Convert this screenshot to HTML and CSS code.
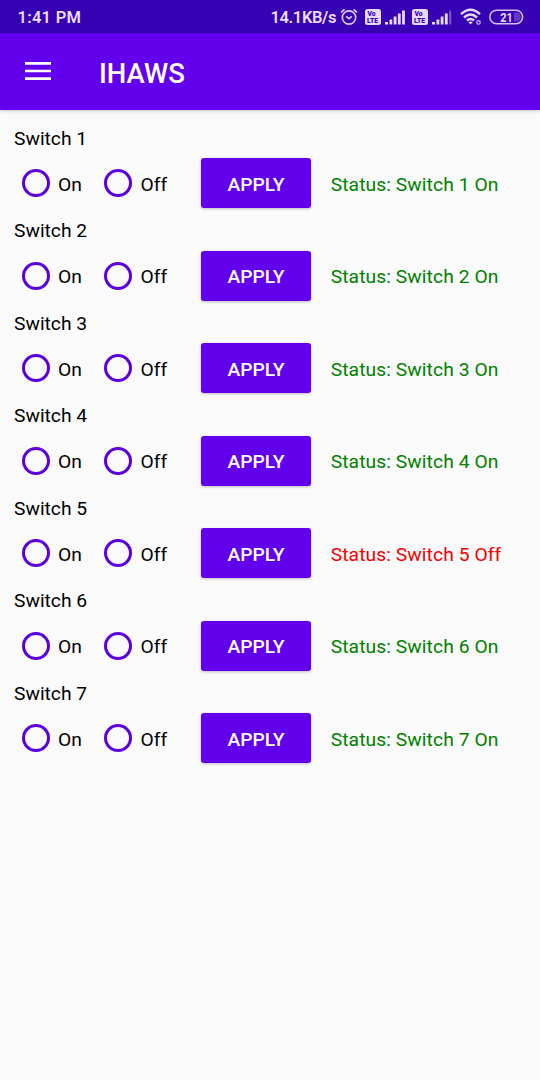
FILE: index.html
```html
<!DOCTYPE html>
<html lang="en">
<head>
<meta charset="utf-8">
<title>IHAWS</title>
<link rel="stylesheet" href="styles.css">
</head>
<body>
<header class="status-bar">
  <span class="clock">1:41 PM</span>
  <span class="speed">14.1KB/s</span>
  <svg class="alarm" width="18" height="18" viewBox="0 0 18 18"><circle cx="9" cy="9.5" r="6.700"/><path d="M1 4.300 4.500 1.300M17 4.300 13.500 1.300M6.200 8.300 9 10.700l2.800-2.400"/></svg>
  <svg class="volte" width="16" height="16" viewBox="0 0 16 16"><rect width="16" height="16" rx="2.5"/><text x="2.500" y="7">Vo</text><text x="2" y="14.300">LTE</text></svg>
  <svg class="signal" width="20" height="16" viewBox="0 0 20 16"><path d="M0 13h3v2.500H0zM4.500 10.500h2.800v5H4.500zM8.700 7.500h2.800v8H8.700zM12.900 4.500h2.800v11h-2.800zM17.100 1.500h2.800v14h-2.800z"/></svg>
  <svg class="volte volte-second" width="16" height="16" viewBox="0 0 16 16"><rect width="16" height="16" rx="2.5"/><text x="2.500" y="7">Vo</text><text x="2" y="14.300">LTE</text></svg>
  <svg class="signal" width="20" height="16" viewBox="0 0 20 16"><path d="M0 13h3v2.500H0zM4.500 10.500h2.800v5H4.500zM8.700 7.500h2.800v8H8.700zM12.900 4.500h2.800v11h-2.800z"/><path class="dim" d="M17.100 1.500h2.200v14h-2.200z"/></svg>
  <svg class="wifi" width="22" height="17" viewBox="0 0 22 17"><path d="M1 6.200Q10.500-2.700 20 6.200M4 9.500q6.500-6 13 0M7 12.500q3.500-3 7 0"/><path class="dot" d="m8.300 14.300 2.200 2.200 2.200-2.200q-2.200-1.700-4.400 0z"/><circle class="badge" cx="18.500" cy="14.500" r="1.700"/></svg>
  <svg class="battery" width="35" height="16" viewBox="0 0 35 16"><path class="rest" d="M25 3.500h2.500a4.500 4.500 0 0 1 0 9H25z"/><rect x=".8" y="1.300" width="32.800" height="13.400" rx="6.700"/><text x="11.300" y="12.600" textLength="12.500" lengthAdjust="spacingAndGlyphs">21</text></svg>
</header>
<nav class="app-bar">
  <svg class="menu" width="26" height="18" viewBox="0 0 26 18"><path d="M0 1.400h26M0 9h26M0 16.600h26"/></svg>
  <h1 class="title">IHAWS</h1>
</nav>
<main class="switches">
  <section class="switch"><div class="label">Switch 1</div><div class="row"><label class="option"><input type="radio" name="s1"><span>On</span></label><label class="option"><input type="radio" name="s1"><span>Off</span></label><button class="apply">APPLY</button><span class="status">Status: Switch 1 On</span></div></section>
  <section class="switch"><div class="label">Switch 2</div><div class="row"><label class="option"><input type="radio" name="s2"><span>On</span></label><label class="option"><input type="radio" name="s2"><span>Off</span></label><button class="apply">APPLY</button><span class="status">Status: Switch 2 On</span></div></section>
  <section class="switch"><div class="label">Switch 3</div><div class="row"><label class="option"><input type="radio" name="s3"><span>On</span></label><label class="option"><input type="radio" name="s3"><span>Off</span></label><button class="apply">APPLY</button><span class="status">Status: Switch 3 On</span></div></section>
  <section class="switch"><div class="label">Switch 4</div><div class="row"><label class="option"><input type="radio" name="s4"><span>On</span></label><label class="option"><input type="radio" name="s4"><span>Off</span></label><button class="apply">APPLY</button><span class="status">Status: Switch 4 On</span></div></section>
  <section class="switch"><div class="label">Switch 5</div><div class="row"><label class="option"><input type="radio" name="s5"><span>On</span></label><label class="option"><input type="radio" name="s5"><span>Off</span></label><button class="apply">APPLY</button><span class="status off">Status: Switch 5 Off</span></div></section>
  <section class="switch"><div class="label">Switch 6</div><div class="row"><label class="option"><input type="radio" name="s6"><span>On</span></label><label class="option"><input type="radio" name="s6"><span>Off</span></label><button class="apply">APPLY</button><span class="status">Status: Switch 6 On</span></div></section>
  <section class="switch"><div class="label">Switch 7</div><div class="row"><label class="option"><input type="radio" name="s7"><span>On</span></label><label class="option"><input type="radio" name="s7"><span>Off</span></label><button class="apply">APPLY</button><span class="status">Status: Switch 7 On</span></div></section>
</main>
</body>
</html>
```

FILE: styles.css
```css
* { box-sizing: border-box; }
body {
  margin: 0;
  min-height: 1080px;
  background: #fafafa;
  color: #000;
  font-family: Roboto, sans-serif;
  font-size: 19.25px;
}
svg { display: block; flex: none; }

.status-bar {
  display: flex;
  align-items: center;
  height: 33px;
  padding: 0 16px 0 17.5px;
  background: #3700b3;
  color: #eadfff;
  font-size: 16.5px;
  font-weight: 600;
}
.clock { flex: 1; padding-top: 1px; letter-spacing: .25px; }
.speed { padding-top: 1px; letter-spacing: -.4px; }
.alarm { margin-left: 4px; fill: none; stroke: #dccbfa; stroke-width: 1.7; }
.volte { margin-left: 7px; fill: #e6dafb; }
.volte-second { margin-left: 7px; }
.volte text { fill: #3700b3; font-size: 6.8px; font-weight: 900; }
.signal { margin-left: 4px; fill: #e6dafb; }
.signal .dim { fill: #7650cd; }
.wifi { margin-left: 8px; fill: none; stroke: #e6dafb; stroke-width: 2.4; }
.wifi .dot { fill: #e6dafb; stroke: none; }
.wifi .badge { stroke-width: 1.5; stroke: #b79de8; }
.battery { margin-left: 7px; fill: none; stroke: #d3c1f6; stroke-width: 1.5; }
.battery .rest { fill: #5f38c4; stroke: none; }
.battery text { fill: #eadfff; stroke: none; font-size: 13px; font-weight: 700; }

.app-bar {
  display: flex;
  align-items: center;
  height: 77px;
  padding: 0 25px;
  background: #6200ee;
  box-shadow: 0 1px 4px rgba(0, 0, 0, .2);
}
.menu { margin-top: -2px; stroke: #fff; stroke-width: 2.7; }
.title {
  margin: 3px 0 0 48px;
  color: #fff;
  font-size: 27.5px;
  font-weight: 500;
}

.switches { padding: 13.8px 14px 0; }
.label { height: 26.5px; line-height: 29px; }
.row { display: flex; align-items: center; height: 66px; }
.option {
  display: flex;
  align-items: center;
  width: 82.5px;
  padding-left: 8px;
}
.option + .option { width: 82px; margin-left: -.5px; padding-left: 8px; }
.option span { padding-top: 2px; }
.option input {
  appearance: none;
  width: 28px;
  height: 28px;
  margin: 0 8px 0 0;
  border: 3px solid #5b00dd;
  border-radius: 50%;
}
.option + .option input { margin-right: 8.5px; }
.apply {
  width: 110px;
  height: 50px;
  margin-left: 23px;
  padding: 2px 0 0;
  border: 0;
  border-radius: 3px;
  background: #6200ee;
  box-shadow: 0 1px 3px rgba(0, 0, 0, .25);
  color: #fff;
  font: 500 19.25px Roboto, sans-serif;
}
.status {
  margin: 2px 0 0 19.7px;
  color: #008000;
  letter-spacing: .08px;
  white-space: nowrap;
}
.status.off { color: #f00000; }
```
